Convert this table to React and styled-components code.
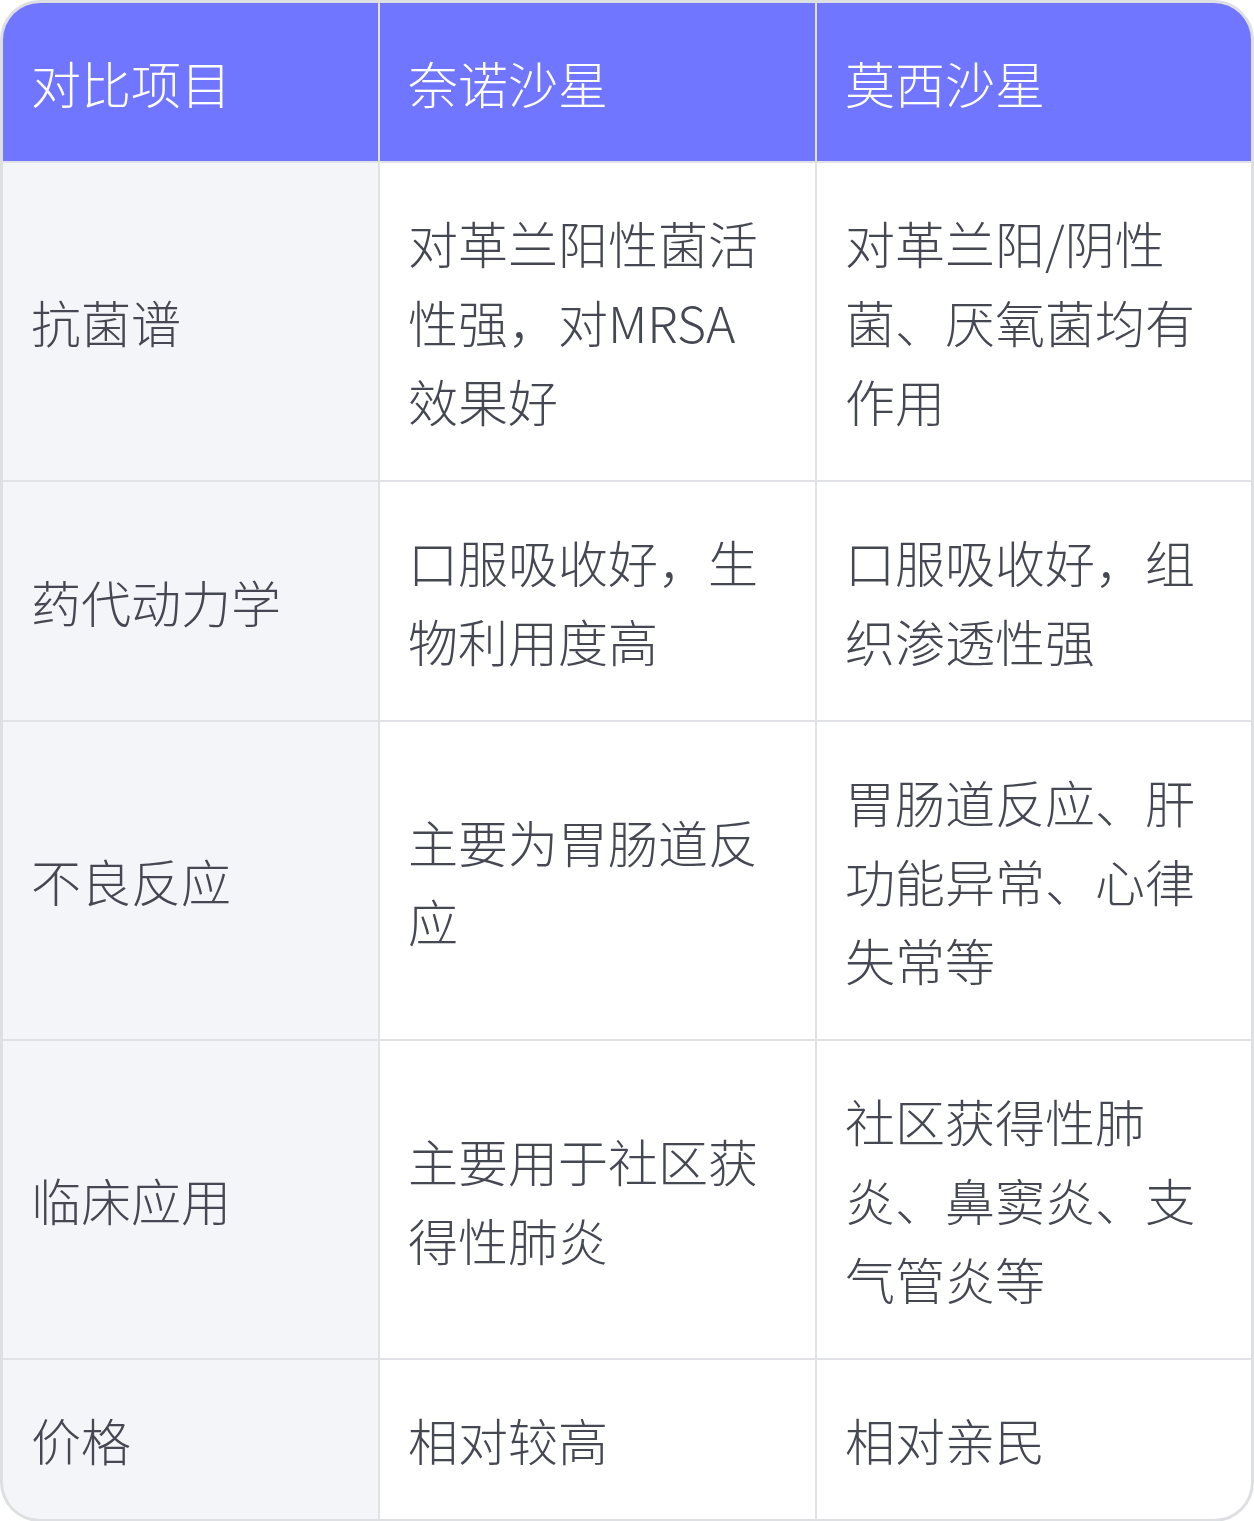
import styled, { createGlobalStyle } from "styled-components";

const GlobalStyle = createGlobalStyle`
  body {
    margin: 0;
    background: #fff;
    font-family: "Noto Sans CJK SC", "Noto Sans", sans-serif;
  }
`;

const rows = [
  {
    label: "抗菌谱",
    a: "对革兰阳性菌活性强，对MRSA效果好",
    b: "对革兰阳/阴性菌、厌氧菌均有作用",
  },
  {
    label: "药代动力学",
    a: "口服吸收好，生物利用度高",
    b: "口服吸收好，组织渗透性强",
  },
  {
    label: "不良反应",
    a: "主要为胃肠道反应",
    b: "胃肠道反应、肝功能异常、心律失常等",
  },
  {
    label: "临床应用",
    a: "主要用于社区获得性肺炎",
    b: "社区获得性肺炎、鼻窦炎、支气管炎等",
  },
  { label: "价格", a: "相对较高", b: "相对亲民" },
];

export default function App() {
  return (
    <>
      <GlobalStyle />
      <Table>
        <HeadCell>对比项目</HeadCell>
        <HeadCell>奈诺沙星</HeadCell>
        <HeadCell>莫西沙星</HeadCell>
        {rows.map((r) => (
          <Row key={r.label}>
            <Cell first>{r.label}</Cell>
            <Cell>{r.a}</Cell>
            <Cell>{r.b}</Cell>
          </Row>
        ))}
      </Table>
    </>
  );
}

const Table = styled.div`
  box-sizing: border-box;
  width: 1254px;
  display: grid;
  grid-template-columns: 375px 435px 1fr;
  gap: 2px;
  background: #e1e2e6;
  border: 3px solid #dedfe3;
  border-radius: 40px;
  overflow: hidden;
`;

const Row = styled.div`
  display: contents;
`;

const CellBase = styled.div`
  display: flex;
  align-items: center;
  padding: 40px 40px 40px 28px;
  font-size: 50px;
  line-height: 79px;
  font-weight: 300;
`;

const HeadCell = styled(CellBase)`
  background: #7076ff;
  color: #ffffff;
  padding-bottom: 39px;
`;

const Cell = styled(CellBase)`
  background: ${(p) => (p.first ? "#f4f5f9" : "#ffffff")};
  color: #454852;
`;
